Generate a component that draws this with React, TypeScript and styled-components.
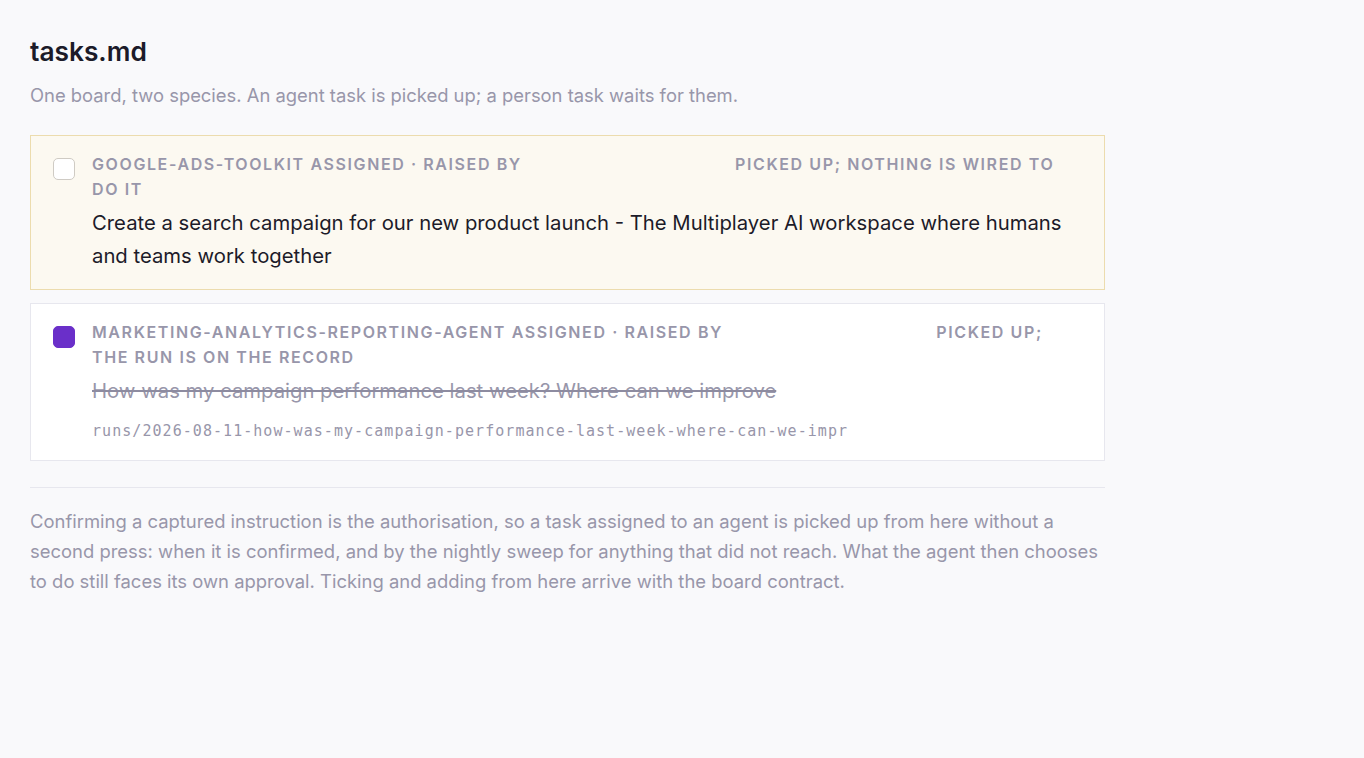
import React, { FC } from 'react';
import styled, { createGlobalStyle, css } from 'styled-components';

const GlobalStyle = createGlobalStyle`
  html, body {
    margin: 0;
    padding: 0;
    background: #f9f9fb;
  }
  body {
    font-family: Inter, "Noto Sans", "Liberation Sans", sans-serif;
    color: #1c1b29;
    -webkit-font-smoothing: antialiased;
  }
`;

const Page = styled.main`
  width: 1075px;
  padding: 35px 30px 60px;
`;

const Title = styled.h1`
  margin: 0;
  font-size: 26.3px;
  line-height: 34px;
  font-weight: 600;
  color: #1c1b29;
`;

const Subtitle = styled.p`
  margin: 11px 0 25px;
  font-size: 18.4px;
  line-height: 30px;
  color: #9896aa;
`;

const List = styled.div`
  display: flex;
  flex-direction: column;
  gap: 13px;
`;

const Card = styled.div<{ pending?: boolean }>`
  display: flex;
  gap: 17px;
  padding: 16px 22px 17px;
  border: 1px solid #e7e7ee;
  background: #ffffff;

  ${(p) =>
    p.pending &&
    css`
      border-color: #ecdcae;
      background: #fcf9f1;
    `}
`;

const Box = styled.span<{ done?: boolean }>`
  flex: none;
  width: 22px;
  height: 22px;
  margin-top: 6px;
  box-sizing: border-box;
  border-radius: 5px;
  border: 1px solid #cfcbc4;
  background: #ffffff;

  ${(p) =>
    p.done &&
    css`
      border-color: #6a2fc9;
      background: #6a2fc9;
    `}
`;

const Body = styled.div`
  flex: 1;
  min-width: 0;
`;

const Meta = styled.div`
  font-size: 16px;
  line-height: 25px;
  font-weight: 600;
  letter-spacing: 1.6px;
  text-transform: uppercase;
  color: #9896aa;
`;

const Gap = styled.span`
  display: inline-block;
  width: 202px;
`;

const Text = styled.div<{ done?: boolean }>`
  margin-top: 4px;
  font-size: 20.3px;
  line-height: 33px;
  color: #1c1b29;

  ${(p) =>
    p.done &&
    css`
      color: #9896aa;
      text-decoration: line-through;
      text-decoration-color: #8d8ba0;
    `}
`;

const RunPath = styled.div`
  margin-top: 12px;
  font-family: "DejaVu Sans Mono", "Liberation Mono", monospace;
  font-size: 15px;
  line-height: 24px;
  letter-spacing: 1.05px;
  color: #9896aa;
`;

const Rule = styled.hr`
  margin: 26px 0 18px;
  border: 0;
  border-top: 1px solid #e7e7ee;
`;

const Note = styled.p`
  margin: 0;
  font-size: 18.45px;
  line-height: 30px;
  color: #9896aa;
`;

interface Task {
  agent: string;
  status: string;
  text: string;
  done?: boolean;
  run?: string;
}

const tasks: Task[] = [
  {
    agent: 'google-ads-toolkit',
    status: 'picked up; nothing is wired to do it',
    text: 'Create a search campaign for our new product launch - The Multiplayer AI workspace where humans and teams work together',
  },
  {
    agent: 'marketing-analytics-reporting-agent',
    status: 'picked up; the run is on the record',
    text: 'How was my campaign performance last week? Where can we improve',
    done: true,
    run: 'runs/2026-08-11-how-was-my-campaign-performance-last-week-where-can-we-impr',
  },
];

const TaskCard: FC<{ task: Task }> = ({ task }) => (
  <Card pending={!task.done}>
    <Box done={task.done} />
    <Body>
      <Meta>
        {task.agent} assigned · raised by <Gap /> {task.status}
      </Meta>
      <Text done={task.done}>{task.text}</Text>
      {task.run && <RunPath>{task.run}</RunPath>}
    </Body>
  </Card>
);

export default function App() {
  return (
    <>
      <GlobalStyle />
      <Page>
        <Title>tasks.md</Title>
        <Subtitle>
          One board, two species. An agent task is picked up; a person task waits for them.
        </Subtitle>
        <List>
          {tasks.map((t) => (
            <TaskCard key={t.agent} task={t} />
          ))}
        </List>
        <Rule />
        <Note>
          Confirming a captured instruction is the authorisation, so a task assigned to an agent is
          picked up from here without a second press: when it is confirmed, and by the nightly sweep
          for anything that did not reach. What the agent then chooses to do still faces its own
          approval. Ticking and adding from here arrive with the board contract.
        </Note>
      </Page>
    </>
  );
}
